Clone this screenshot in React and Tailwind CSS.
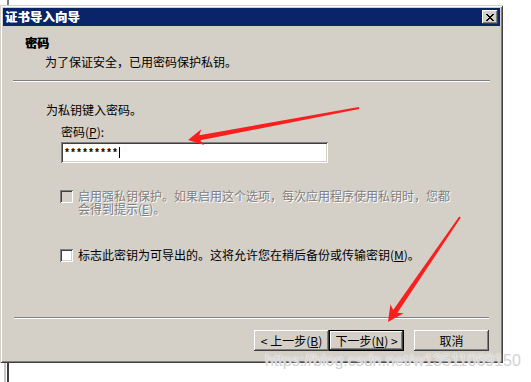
import React from "react";

const raised =
  "shadow-[inset_-1px_-1px_0_#404040,inset_1px_1px_0_#ffffff,inset_-2px_-2px_0_#808080]";
const sunken =
  "shadow-[inset_1px_1px_0_#808080,inset_-1px_-1px_0_#ffffff,inset_2px_2px_0_#404040,inset_-2px_-2px_0_#d4d0c8]";

function Btn({ children, def }) {
  if (def) {
    return (
      <div className="w-[75px] h-[21px] border border-black">
        <div
          className={`w-full h-full bg-[#d4d0c8] flex items-center justify-center leading-[13px] whitespace-pre ${raised}`}
        >
          {children}
        </div>
      </div>
    );
  }
  return (
    <div
      className={`w-[75px] h-[21px] bg-[#d4d0c8] flex items-center justify-center leading-[13px] whitespace-pre ${raised}`}
    >
      {children}
    </div>
  );
}

export default function App() {
  return (
    <div className="relative w-[531px] h-[382px] bg-white overflow-hidden font-['Noto_Sans_CJK_SC',sans-serif] text-[12px] text-black">
      {/* strip of the window behind, top */}
      <div className="h-[5px] flex">
        <div className="ml-[7px] w-[2px] h-full bg-[#808080]" />
      </div>

      {/* wizard window */}
      <div
        className={`w-[503px] h-[358px] bg-[#d4d0c8] p-[3px] flex flex-col shadow-[inset_1px_1px_0_#d4d0c8,inset_-1px_-1px_0_#404040,inset_2px_2px_0_#ffffff,inset_-2px_-2px_0_#808080]`}
      >
        {/* title bar */}
        <div className="h-[18px] bg-[#0a246a] flex items-center justify-between pl-[2px] pr-[2px]">
          <span className="text-white font-bold leading-[14px] tracking-[0.5px] [text-shadow:0.6px_0_0_#ffffff]">
            证书导入向导
          </span>
          <div
            className={`w-[16px] h-[14px] bg-[#d4d0c8] flex items-center justify-center ${raised}`}
          >
            <svg width="8" height="7" viewBox="0 0 8 7" shapeRendering="crispEdges">
              <path
                d="M0 0h2v1h-2zM6 0h2v1h-2zM1 1h2v1h-2zM5 1h2v1h-2zM2 2h4v1h-4zM3 3h2v1h-2zM2 4h4v1h-4zM1 5h2v1h-2zM5 5h2v1h-2zM0 6h2v1h-2zM6 6h2v1h-2z"
                fill="#000"
              />
            </svg>
          </div>
        </div>

        {/* header */}
        <div className="h-[54px] pt-[9px] flex flex-col">
          <div className="pl-[22px] font-bold leading-[16px] [text-shadow:0.6px_0_0_#000000]">密码</div>
          <div className="pl-[42px] mt-[3px] leading-[16px]">
            为了保证安全，已用密码保护私钥。
          </div>
        </div>
        <div className="mx-[10px] h-[2px] border-t border-t-[#808080] border-b border-b-white" />

        {/* body */}
        <div className="h-[235px] flex flex-col">
          <div className="pl-[43px] mt-[20px] leading-[16px]">为私钥键入密码。</div>
          <div className="pl-[58px] mt-[6px] leading-[16px]">
            密码(<span className="underline">P</span>):
          </div>
          <div
            className={`ml-[58px] mt-[2px] w-[267px] h-[21px] bg-white flex items-center pl-[3px] ${sunken}`}
          >
            <span className="font-['Liberation_Mono',monospace] font-bold text-[10px] leading-[10px] pt-[3px]">
              *********
            </span>
            <span className="w-[1px] h-[11px] bg-black ml-[1px]" />
          </div>

          <div className="mt-[26px] ml-[57px] flex items-start gap-[5px]">
            <div className={`mt-[1px] w-[13px] h-[13px] bg-[#d4d0c8] shrink-0 ${sunken}`} />
            <div className="flex flex-col text-[#808080] whitespace-nowrap [text-shadow:1px_1px_0_#ffffff]">
              <span className="leading-[13px] h-[13px]">
                启用强私钥保护。如果启用这个选项，每次应用程序使用私钥时，您都
              </span>
              <span className="leading-[13px] h-[13px]">
                会得到提示(<span className="underline">E</span>)。
              </span>
            </div>
          </div>

          <div className="mt-[33px] ml-[57px] flex items-start gap-[5px]">
            <div className={`mt-[1px] w-[13px] h-[13px] bg-white shrink-0 ${sunken}`} />
            <div className="leading-[13px] whitespace-nowrap">
              标志此密钥为可导出的。这将允许您在稍后备份或传输密钥(<span className="underline">M</span>)。
            </div>
          </div>
        </div>

        <div className="mx-[11px] h-[2px] border-t border-t-[#808080] border-b border-b-white" />

        {/* footer */}
        <div className="pt-[11px] pb-[9px] pr-[11px] flex justify-end">
          <Btn>{"< "}上一步(<span className="underline">B</span>)</Btn>
          <Btn def>下一步(<span className="underline">N</span>){" >"}</Btn>
          <div className="ml-[10px]">
            <Btn>取消</Btn>
          </div>
        </div>
      </div>

      {/* strip of the window behind, bottom */}
      <div className="h-[19px] flex">
        <div className="ml-[4px] w-[2px] h-full bg-[#c8c8c8]" />
        <div className="ml-[1px] w-[2px] h-full bg-[#404040]" />
      </div>

      {/* red annotation arrows */}
      <svg
        className="absolute left-0 top-0 pointer-events-none"
        width="531"
        height="382"
        viewBox="0 0 531 382"
      >
        <polygon
          points="188,140 201.3,129.3 199.3,135.3 358.8,107 359.2,109 200.3,140.3 204.2,145.1"
          fill="#fa1e1e"
        />
        <polygon
          points="388,322 390.4,304.3 393.2,309.9 459.2,216.4 460.8,217.6 397.4,312.7 403.6,313.3"
          fill="#fa1e1e"
        />
      </svg>

      {/* watermark */}
      <div className="absolute left-[265px] top-[353px] font-['Liberation_Sans',Arial,sans-serif] text-[16px] leading-[16px] text-[#d2d2d2] whitespace-nowrap [text-shadow:0_0_1px_#ffffff,0_0_2px_#ffffff]">
        https://blog.csdn.net/w13511069150
      </div>
    </div>
  );
}
